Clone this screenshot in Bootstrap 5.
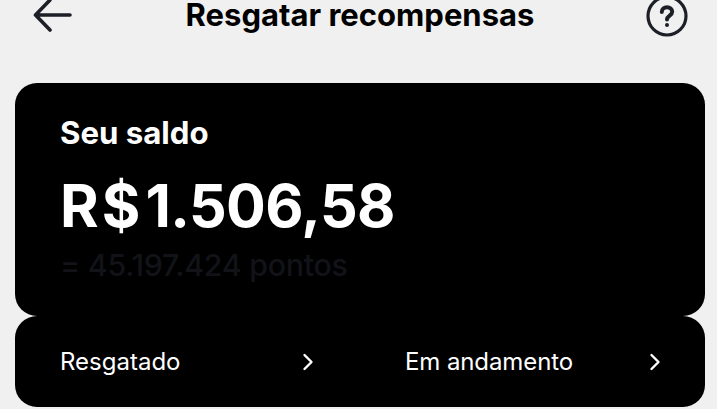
<!DOCTYPE html>
<html lang="pt-BR">
<head>
  <meta charset="UTF-8">
  <meta name="viewport" content="width=device-width, initial-scale=1.0">
  <title>Resgatar recompensas</title>
  <link href="https://cdn.jsdelivr.net/npm/bootstrap@5.3.0/dist/css/bootstrap.min.css" rel="stylesheet">
  <style>
    html, body { height: 409px; overflow: hidden; }
    body { background: #f0f0f1; font-family: Inter, "Liberation Sans", sans-serif; color: #000; }
    .top-bar { height: 83px; padding: 0 29px 0 32px; align-items: flex-start; }
    .top-bar svg { display: block; flex-shrink: 0; }
    .back-icon { margin-top: -3px; }
    .help-icon { margin-top: -5px; }
    .page-title { font-size: 31px; font-weight: 700; line-height: 30px; margin: 0; }
    .balance-box, .links-box { background: #000; color: #fff; border-radius: 22px; margin: 0 12px 0 15px; }
    .balance-box { height: 233px; padding: 30px 45px 0; }
    .links-box { height: 91px; padding: 0 44px 0 45px; }
    .saldo-label { font-size: 31.2px; font-weight: 700; line-height: 40px; }
    .saldo-value { font-size: 59px; font-weight: 700; line-height: 72px; margin-top: 17px; letter-spacing: -.6px; }
    .saldo-cur { letter-spacing: 3px; margin-right: 2px; }
    .saldo-points { font-size: 30.3px; font-weight: 500; letter-spacing: -.25px; color: #111318; line-height: 36px; margin-top: 5px; }
    .link-item { font-size: 24px; color: #fff; text-decoration: none; }
    .link-left { width: 254px; }
    .link-right { width: 256px; margin-left: 91px; letter-spacing: -.1px; }
  </style>
</head>
<body>
  <!-- Header -->
  <div class="top-bar d-flex justify-content-between">
    <svg class="back-icon" width="42" height="36" viewBox="0 0 42 36" fill="none" stroke="#1c1f26" stroke-width="3.6" stroke-linecap="round" stroke-linejoin="round">
      <path d="M38 18H3.500M18 3 3.500 18 18 33"/>
    </svg>
    <h1 class="page-title">Resgatar recompensas</h1>
    <svg class="help-icon" width="42" height="42" viewBox="0 0 42 42" fill="none" stroke="#1c1f26" stroke-width="3.2" stroke-linecap="round">
      <circle cx="21" cy="21" r="19"/>
      <path d="M15.800 17c0-3 2.300-4.800 5.200-4.800s5.200 1.800 5.200 4.600c0 3.800-5.200 3.800-5.200 7.700" stroke-width="4"/>
      <circle cx="21" cy="30" r="2" fill="#1c1f26" stroke="none"/>
    </svg>
  </div>

  <!-- Saldo -->
  <div class="balance-box">
    <div class="saldo-label">Seu saldo</div>
    <div class="saldo-value"><span class="saldo-cur">R$</span>1.506,58</div>
    <div class="saldo-points">= 45.197.424 pontos</div>
  </div>

  <!-- Links -->
  <div class="links-box d-flex align-items-center">
    <a class="link-item link-left d-flex justify-content-between align-items-center" href="#">
      <span>Resgatado</span>
      <svg width="12" height="18" viewBox="0 0 12 18" fill="none" stroke="#fff" stroke-width="2.400" stroke-linecap="round" stroke-linejoin="round"><path d="M2.500 2 9.500 9 2.500 16"/></svg>
    </a>
    <a class="link-item link-right d-flex justify-content-between align-items-center" href="#">
      <span>Em andamento</span>
      <svg width="12" height="18" viewBox="0 0 12 18" fill="none" stroke="#fff" stroke-width="2.400" stroke-linecap="round" stroke-linejoin="round"><path d="M2.500 2 9.500 9 2.500 16"/></svg>
    </a>
  </div>

  <script src="https://cdn.jsdelivr.net/npm/bootstrap@5.3.0/dist/js/bootstrap.bundle.min.js"></script>
</body>
</html>
